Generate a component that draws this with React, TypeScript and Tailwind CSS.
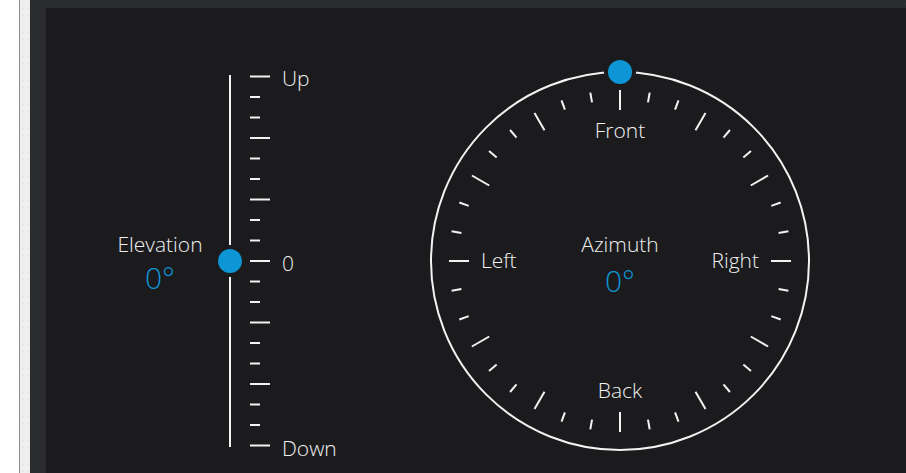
import React from 'react';

const BLUE = '#0e95d5';
const PANEL = '#1b1b1d';

const ElevationSlider: React.FC = () => {
  const ticks = Array.from({ length: 19 }, (_, i) => i);
  const tickY = (i: number) => 15.5 + i * 20.5;

  return (
    <svg width="130" height="400" viewBox="0 0 130 400" xmlns="http://www.w3.org/2000/svg">
      <line x1="16" y1="14" x2="16" y2="386" stroke="#f2f2f2" strokeWidth="2" />
      {ticks.map((i) => (
        <line
          key={i}
          x1="36"
          y1={tickY(i)}
          x2={i % 3 === 0 ? 56 : 46}
          y2={tickY(i)}
          stroke="#f2f2f2"
          strokeWidth="2"
        />
      ))}
      <circle cx="16" cy="200" r="16" fill={PANEL} />
      <circle cx="16" cy="200" r="12" fill={BLUE} />
      <g fill="#f0f0f0" fontSize="21" fontWeight="300" fontFamily="'Open Sans', sans-serif">
        <text x="68" y={tickY(0) + 9.5}>Up</text>
        <text x="68" y={tickY(9) + 10}>0</text>
        <text x="68" y={tickY(18) + 10}>Down</text>
      </g>
    </svg>
  );
};

const AzimuthDial: React.FC = () => {
  const c = 205;
  const ticks = Array.from({ length: 36 }, (_, i) => i);

  return (
    <svg width="410" height="410" viewBox="0 0 410 410" xmlns="http://www.w3.org/2000/svg">
      <circle cx={c} cy={c} r="189" fill="none" stroke="#f2f2f2" strokeWidth="2" />
      {ticks.map((i) => {
        const a = (i * 10 * Math.PI) / 180;
        const r1 = i % 3 === 0 ? 151 : 161;
        const r2 = 171;
        return (
          <line
            key={i}
            x1={c + Math.sin(a) * r1}
            y1={c - Math.cos(a) * r1}
            x2={c + Math.sin(a) * r2}
            y2={c - Math.cos(a) * r2}
            stroke="#f2f2f2"
            strokeWidth="2"
          />
        );
      })}
      <g fill="#f0f0f0" fontSize="21" fontWeight="300" fontFamily="'Open Sans', sans-serif">
        <text x={c} y="82" textAnchor="middle">Front</text>
        <text x={c} y="342" textAnchor="middle">Back</text>
        <text x="66" y="212">Left</text>
        <text x="344" y="212" textAnchor="end">Right</text>
      </g>
      <circle cx={c} cy="16" r="16" fill={PANEL} />
      <circle cx={c} cy="16" r="12" fill={BLUE} />
    </svg>
  );
};

const Readout: React.FC<{ label: string; value: string; gap: string }> = ({ label, value, gap }) => (
  <div className={`flex flex-col items-center font-['Open_Sans',sans-serif] font-light ${gap}`}>
    <span className="text-[21px] leading-[26px] text-[#f0f0f0]">{label}</span>
    <span className="text-[30px] leading-[34px] text-[#0e95d5]">{value}</span>
  </div>
);

export default function App() {
  return (
    <div className="flex h-[473px] w-[906px] overflow-hidden bg-white">
      <div className="w-[19px] shrink-0 bg-white" />
      <div className="w-[11px] shrink-0 border-l border-[#8c8c8c] bg-[#efefef] bg-[radial-gradient(#e8e8e8_1px,transparent_1px)] bg-[length:6px_6px]" />
      <div className="flex flex-1 bg-[#2b2c30] bg-[radial-gradient(#2f3034_1px,transparent_1px)] bg-[length:8px_8px] pl-[16px] pt-[8px]">
        <div className="flex flex-1 items-start bg-[#1b1b1d] pl-[64px] pt-[48px]">
          <div className="flex h-[410px] items-center">
            <div className="w-[100px] pt-[4px]">
              <Readout label="Elevation" value="0°" gap="gap-[4px]" />
            </div>
            <div className="ml-[4px]">
              <ElevationSlider />
            </div>
          </div>
          <div className="relative ml-[71px]">
            <AzimuthDial />
            <div className="absolute left-0 right-0 top-[175px] flex justify-center">
              <Readout label="Azimuth" value="0°" gap="gap-[7px]" />
            </div>
          </div>
        </div>
      </div>
    </div>
  );
}
